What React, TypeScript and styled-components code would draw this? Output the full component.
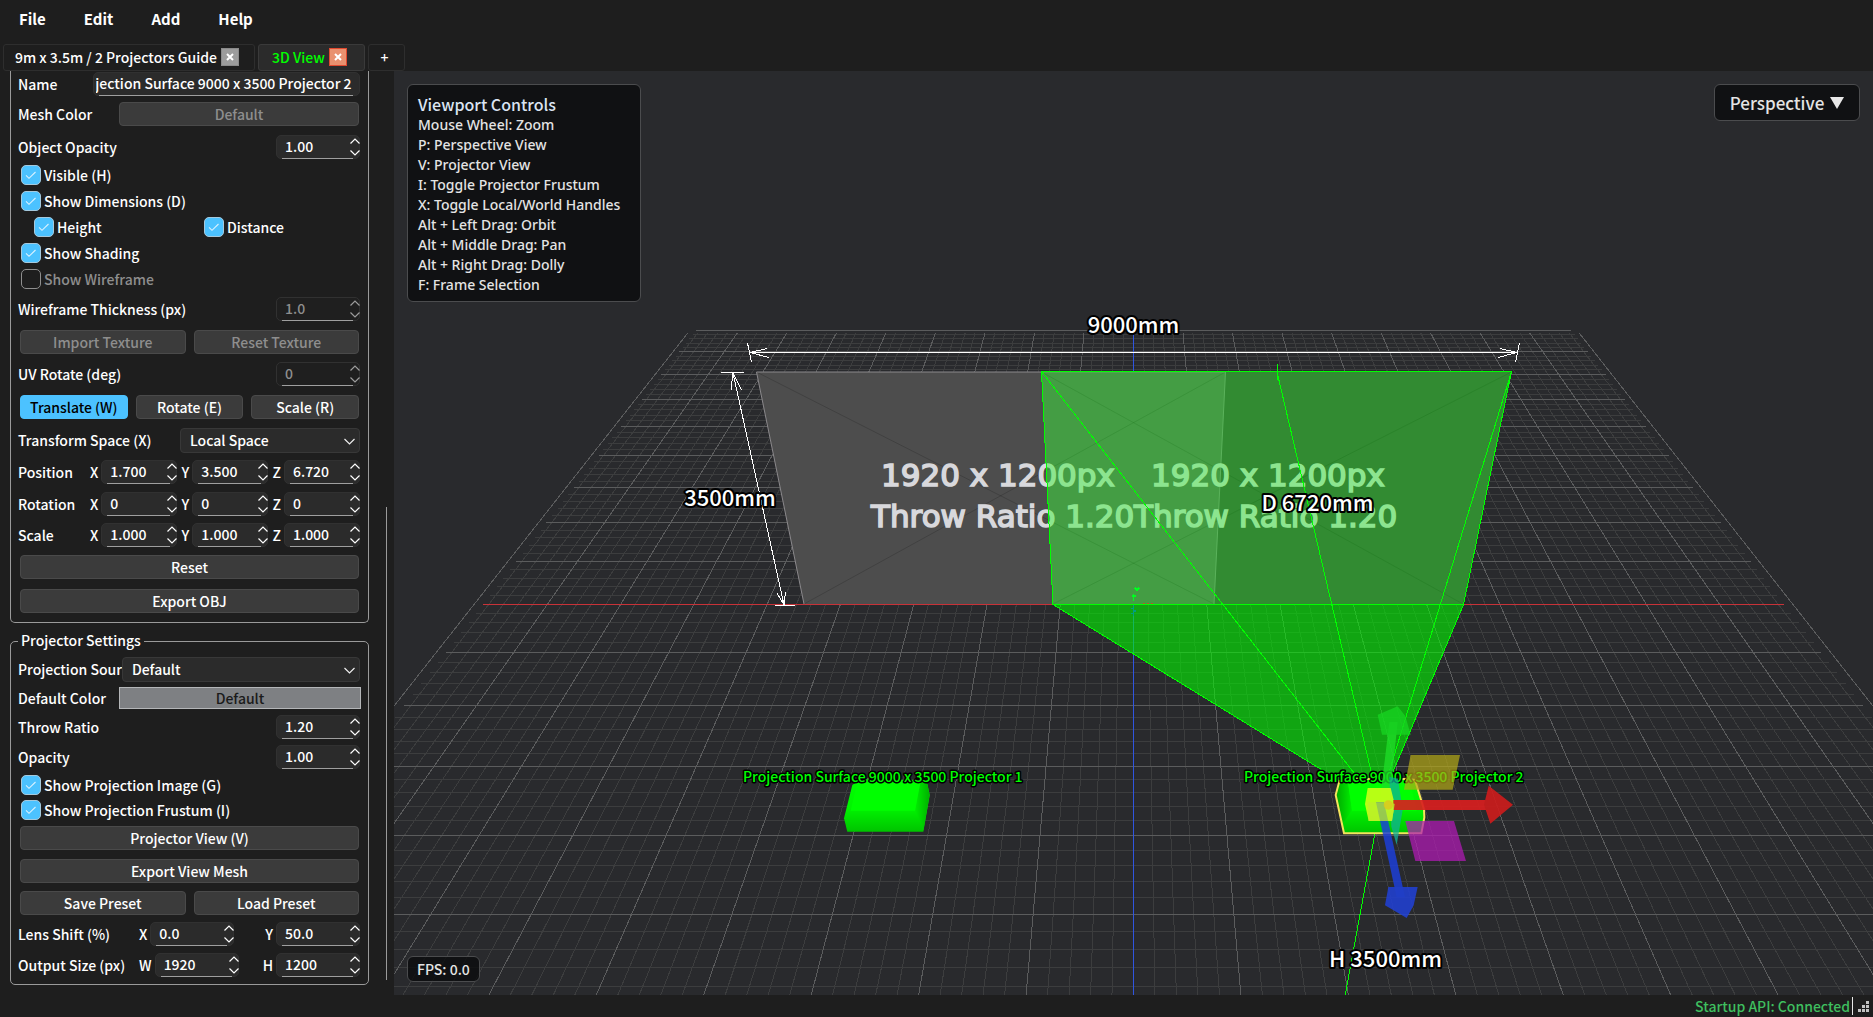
import React, { useEffect, useRef } from "react";
import styled, { createGlobalStyle, css } from "styled-components";

const UI_FONT = `"Noto Sans CJK KR", "Noto Sans", sans-serif`;

const GlobalStyle = createGlobalStyle`
  * { box-sizing: border-box; }
  body { margin: 0; background: #1e1e1e; }
  button, input, select { font: inherit; color: inherit; margin: 0; }
`;

/* ---------- frame ---------- */

const Page = styled.div`
  display: flex;
  flex-direction: column;
  height: 100vh;
  overflow: hidden;
  background: #1e1e1e;
  color: #fff;
  font-family: ${UI_FONT};
  font-size: 14px;
  font-weight: 500;
  line-height: 20px;
`;

const MenuBar = styled.nav`
  display: flex;
  flex: none;
  height: 44px;
  padding: 4px 0 10px 9px;
  gap: 18px;
`;

const MenuItem = styled.button`
  border: 0;
  padding: 0 10px;
  background: none;
  font-size: 15px;
  font-weight: 700;
`;

const TabStrip = styled.div`
  display: flex;
  flex: none;
  height: 27px;
  gap: 3px;
  padding-left: 3px;
`;

const Tab = styled.div<{ $active?: boolean }>`
  display: flex;
  align-items: center;
  justify-content: center;
  gap: 4px;
  width: ${(p) => (p.$active ? 107 : 252)}px;
  padding: 0 4px 2px 0;
  border: 1px solid ${(p) => (p.$active ? "#3a3a3a" : "#2e2e2e")};
  border-radius: 3px;
  background: ${(p) => (p.$active ? "#2b2b2b" : "#1e1e1e")};
`;

const TabName = styled.button<{ $active?: boolean }>`
  border: 0;
  padding: 0;
  background: none;
  white-space: nowrap;
  color: ${(p) => (p.$active ? "#00ff00" : "#fff")};
`;

const CloseButton = styled.button<{ $active?: boolean }>`
  display: grid;
  place-items: center;
  width: 18px;
  height: 18px;
  padding: 0;
  border: 1px solid ${(p) => (p.$active ? "#e0492f" : "#8a8a8a")};
  background: ${(p) => (p.$active ? "#e9916f" : "#9c9c9c")};
`;

const AddTab = styled.button`
  width: 37px;
  padding: 0 4px 2px 0;
  border: 1px solid #2e2e2e;
  border-radius: 3px;
  background: none;
`;

const Main = styled.main`
  display: flex;
  flex: 1;
  min-height: 0;
`;

const StatusBar = styled.footer`
  display: flex;
  flex: none;
  align-items: center;
  justify-content: flex-end;
  gap: 2px;
  height: 22px;
  padding-right: 4px;
  color: #3fbf5f;
`;

const Caret = styled.span`
  width: 1px;
  height: 18px;
  margin-right: 3px;
  background: #e8e8e8;
`;

/* ---------- side panel ---------- */

const Side = styled.aside`
  display: flex;
  flex: none;
  width: 394px;
  padding-left: 10px;
  overflow: hidden;
`;

const Groups = styled.div`
  width: 359px;
`;

const Group = styled.section<{ $open?: boolean }>`
  display: flex;
  flex-direction: column;
  border: 1px solid #9a9a9a;
  border-radius: ${(p) => (p.$open ? "0 0 5px 5px" : "5px")};
  padding: ${(p) => (p.$open ? "0 8px 4px 7px" : "4px 8px 4px 7px")};
  ${(p) => p.$open && css`border-top: 0;`}
`;

const GroupTitle = styled.h2`
  align-self: flex-start;
  margin: -17px 0 0;
  padding: 0 3px;
  background: #1e1e1e;
  font-size: 14px;
  font-weight: 500;
  line-height: 22px;
`;

const GroupSpace = styled.div`
  height: 18px;
`;

const Row = styled.div<{ $h: number }>`
  display: flex;
  align-items: center;
  justify-content: space-between;
  height: ${(p) => p.$h}px;
`;

const Label = styled.label<{ $w?: number }>`
  width: ${(p) => (p.$w ? `${p.$w}px` : "auto")};
  white-space: nowrap;
`;

const ButtonRow = styled(Row)`
  padding: 0 1px 0 2px;
  gap: 8px;
`;

const PushButton = styled.button<{ $on?: boolean }>`
  flex: 1;
  height: 24px;
  padding: 0;
  border: 1px solid ${(p) => (p.$on ? "#4cc2ff" : "#4a4a4a")};
  border-radius: 4px;
  background: ${(p) => (p.$on ? "#4cc2ff" : "#3b3b3b")};
  color: ${(p) => (p.$on ? "#000" : "#fff")};
  line-height: 20px;
  &:disabled { color: #8e8e8e; }
`;

const MeshButton = styled(PushButton)`
  flex: none;
  width: 240px;
  margin-right: 1px;
`;

const ColorButton = styled.button`
  width: 242px;
  height: 22px;
  margin-right: -1px;
  padding: 0;
  border: 1px solid #b4b6b8;
  background: #7e8083;
  color: #1b1b1b;
  line-height: 18px;
`;

const Field = styled.div<{ $w: number; $off?: boolean }>`
  position: relative;
  width: ${(p) => p.$w}px;
  height: 24px;
  border: 1px solid #313131;
  border-radius: 5px;
  background: ${(p) => (p.$off ? "#1f1f1f" : "#2b2b2b")};
  color: ${(p) => (p.$off ? "#8e8e8e" : "#fff")};
  &::after {
    content: "";
    position: absolute;
    left: 5px;
    right: 6px;
    bottom: -1px;
    height: 1px;
    background: #9f9f9f;
  }
`;

const FieldInput = styled.input<{ $wide?: boolean }>`
  display: block;
  width: 100%;
  height: 22px;
  padding: ${(p) => (p.$wide ? "0 7px 2px 2px" : "0 16px 2px 8px")};
  border: 0;
  outline: 0;
  background: none;
`;

const Arrows = styled.svg<{ $off?: boolean }>`
  position: absolute;
  right: -2px;
  top: 1px;
  width: 12px;
  height: 20px;
  fill: none;
  stroke: ${(p) => (p.$off ? "#9c9c9c" : "#fff")};
  stroke-width: 1.2;
`;

const Axis = styled.div`
  display: flex;
  align-items: center;
  gap: 3px;
`;

const AxisSet = styled.div`
  display: flex;
  flex: 1;
  justify-content: space-between;
`;

const PairSet = styled.div<{ $gap: number }>`
  display: flex;
  flex: 1;
  justify-content: flex-end;
  gap: ${(p) => p.$gap}px;
`;

const SelectBox = styled.div<{ $w: number }>`
  position: relative;
  width: ${(p) => p.$w}px;
  height: 25px;
  select {
    appearance: none;
    width: 100%;
    height: 25px;
    padding: 0 24px 0 9px;
    border: 1px solid #383838;
    border-radius: 4px;
    background: #2b2b2b;
    line-height: 22px;
  }
  svg {
    position: absolute;
    right: 5px;
    top: 10px;
    fill: none;
    stroke: #eee;
    stroke-width: 1.2;
    pointer-events: none;
  }
`;

const CheckRow = styled.div<{ $h: number; $inset?: boolean }>`
  display: grid;
  grid-template-columns: ${(p) => (p.$inset ? "170px 1fr" : "1fr")};
  align-items: center;
  height: ${(p) => p.$h}px;
  padding-left: ${(p) => (p.$inset ? 16 : 3)}px;
`;

const CheckLabel = styled.label<{ $off?: boolean }>`
  display: flex;
  align-items: center;
  gap: 3px;
  color: ${(p) => (p.$off ? "#8e8e8e" : "#fff")};
`;

const CheckBox = styled.input`
  appearance: none;
  width: 20px;
  height: 20px;
  border: 1px solid #8f8f8f;
  border-radius: 5px;
  background: #1e1e1e;
  &:checked {
    border-color: #a5c9dd;
    background: #4cc2ff
      url("data:image/svg+xml,%3Csvg xmlns='http://www.w3.org/2000/svg' viewBox='0 0 18 18' fill='none' stroke='%23d8f1ff' stroke-width='1.1'%3E%3Cpath d='M4 9.3l3 3L13.5 6'/%3E%3C/svg%3E")
      center / 18px 18px;
  }
`;

const ScrollTrack = styled.div`
  display: flex;
  align-items: flex-end;
  width: 25px;
  padding: 0 0 15px 17px;
`;

const ScrollThumb = styled.div`
  width: 1px;
  height: 52%;
  background: #9a9a9a;
`;

/* ---------- viewport ---------- */

const Viewport = styled.section`
  position: relative;
  flex: 1;
  min-width: 0;
  background: #292a2d;
  overflow: hidden;
`;

const Scene = styled.svg`
  display: block;
  width: 100%;
  height: 100%;
  text {
    font-family: ${UI_FONT};
  }
`;

const overlayBox = css`
  position: absolute;
  border: 1px solid #4b4c4e;
  border-radius: 6px;
  background: #101113;
  color: #e4e4e4;
`;

const HelpBox = styled.div`
  ${overlayBox}
  top: 13px;
  left: 13px;
  width: 234px;
  padding: 9px 10px 6px;
  h3 {
    margin: 0;
    color: #dbe4f2;
    font-size: 16px;
    font-weight: 500;
    line-height: 20px;
  }
  ul {
    margin: 1px 0 0;
    padding: 0;
    list-style: none;
    font-family: "Noto Sans", sans-serif;
  }
`;

const ViewButton = styled.button`
  ${overlayBox}
  top: 13px;
  right: 13px;
  display: flex;
  align-items: center;
  justify-content: center;
  gap: 6px;
  width: 146px;
  height: 37px;
  font-size: 17px;
`;

const Fps = styled.div`
  ${overlayBox}
  left: 13px;
  bottom: 13px;
  padding: 2px 9px;
  background: rgba(10, 11, 13, 0.8);
`;

/* ---------- parts ---------- */

const Spin = ({ id, w, value, off }: { id: string; w: number; value: string; off?: boolean }) => (
  <Field $w={w} $off={off}>
    <FieldInput id={id} defaultValue={value} disabled={off} />
    <Arrows $off={off} viewBox="0 0 12 20">
      <path d="M1.500 6.500L6 2L10.500 6.500M1.500 13.500L6 18L10.500 13.500" />
    </Arrows>
  </Field>
);

const AxisField = ({ id, axis, w, value }: { id: string; axis: string; w: number; value: string }) => (
  <Axis>
    <label htmlFor={id}>{axis}</label>
    <Spin id={id} w={w} value={value} />
  </Axis>
);

const Vector = ({ name, values, h }: { name: string; values: string[]; h: number }) => (
  <Row $h={h}>
    <Label as="span" $w={72}>{name}</Label>
    <AxisSet>
      {["X", "Y", "Z"].map((a, i) => (
        <AxisField key={a} id={`${name}-${a}`} axis={a} w={76} value={values[i]} />
      ))}
    </AxisSet>
  </Row>
);

const Check = ({ name, off }: { name: string; off?: boolean }) => (
  <CheckLabel $off={off}>
    <CheckBox type="checkbox" defaultChecked={!off} disabled={off} />
    {name}
  </CheckLabel>
);

const Select = ({ id, w, options }: { id: string; w: number; options: string[] }) => (
  <SelectBox $w={w}>
    <select id={id}>
      {options.map((o) => (
        <option key={o}>{o}</option>
      ))}
    </select>
    <svg width="11" height="7" viewBox="0 0 11 7">
      <path d="M.5 1L5.500 6L10.500 1" />
    </svg>
  </SelectBox>
);

const Cross = () => (
  <svg width="8" height="8" viewBox="0 0 8 8" stroke="#fff" strokeWidth="2">
    <path d="M1 1l6 6M7 1l-6 6" />
  </svg>
);

/* ---------- ground grid ---------- */

const CX = 1133.5;
const HORIZON = -233;
const DEPTH = 18.507;
const SCALE_X = 1356;
const SCALE_Y = 15498;
const EXTENT = 8.88;

const ground = (x: number, z: number): [number, number] => {
  const w = DEPTH + z;
  return [CX + (SCALE_X * x) / w, HORIZON + SCALE_Y / w];
};

const segment = (x1: number, z1: number, x2: number, z2: number) => {
  const a = ground(x1, z1);
  const b = ground(x2, z2);
  return `M${a[0].toFixed(1)} ${a[1].toFixed(1)}L${b[0].toFixed(1)} ${b[1].toFixed(1)}`;
};

const gridPath = (major: boolean) => {
  const parts: string[] = [];
  for (let i = -45; i <= 45; i++) {
    if ((i % 5 === 0) !== major || i === 0) continue;
    const v = i / 5;
    parts.push(segment(v, EXTENT, v, -7));
    if (v > -7) parts.push(segment(-EXTENT, v, EXTENT, v));
  }
  return parts.join("");
};

const MINOR = gridPath(false);
const MAJOR = gridPath(true);

const Tag = styled.text`
  fill: #fff;
  stroke: #000;
  stroke-width: 4px;
  stroke-linejoin: round;
  paint-order: stroke;
  font-size: 22px;
  font-weight: 500;
`;

const NameTag = styled(Tag)`
  fill: #00ff00;
  stroke-width: 3px;
  font-size: 14px;
`;

const WallText = styled.text`
  && { font-family: "DejaVu Sans", sans-serif; }
  font-size: 31px;
  fill: #d8d8dc;
  stroke: #d8d8dc;
  stroke-width: 1.6px;
`;

const SceneView = () => (
  <Scene viewBox="394 71 1479 924" preserveAspectRatio="xMidYMid slice">
    <g fill="none" shapeRendering="crispEdges">
      <path d={MINOR} stroke="#3c3d3e" />
      <path d={MAJOR} stroke="#5b5c5d" />
      <path d={segment(-EXTENT, 0, EXTENT, 0)} stroke="#c83238" />
      <path d={segment(0, EXTENT, 0, -7)} stroke="#2f55e0" />
    </g>

    <g>
      <path d="M756.500 372H1225.500L1214 604H804Z" fill="#4d4d4d" />
      <path d="M1041.500 372H1511.500L1463 604H1053Z" fill="#4d4d4d" />
      <path d="M1041.500 372H1225.500L1214 604H1053Z" fill="#696969" />
      <path d="M756.500 372L1214 604M804 604L1225.500 372M1041.500 372L1463 604M1053 604L1511.500 372" stroke="#000" strokeOpacity=".16" fill="none" />
      <path d="M804 604L756.500 372H1225.500L1214 604" stroke="#8b898c" fill="none" />
    </g>

    <WallText x="881" y="486">1920 x 1200px</WallText>
    <WallText x="871" y="527">Throw Ratio 1.20</WallText>
    <WallText x="1151" y="486">1920 x 1200px</WallText>
    <WallText x="1134" y="527">Throw Ratio 1.20</WallText>

    <path d="M1041.500 371.500H1511.500L1463.500 604.500H1053Z" fill="#00ff00" fillOpacity=".35" />
    <path d="M1053 604.500H1463.500L1379 805Z" fill="#00ff00" fillOpacity=".58" />
    <g stroke="#00ff00" fill="none" shapeRendering="crispEdges">
      <path d="M1041.500 371.500H1511.500L1463.500 604.500H1053Z" />
      <path d="M1053 604.500L1379 805L1463.500 604.500M1041.500 371.500L1379 805L1511.500 371.500" />
      <path d="M1277 364V380M1277 372L1379 805M1375 833L1345 996" />
    </g>
    <g fill="none" shapeRendering="crispEdges">
      <path d="M1133.500 594V601M1131.500 596H1136M1135 588l2 2l2-2" stroke="#00ff20" strokeWidth="1.500" />
      <path d="M1133.500 605V616M1131 608l5 3l-5 3" stroke="#00a080" />
      <path d="M1143 603.500h2m2 0h2m2 0h2" stroke="#b06020" />
    </g>

    <g stroke="#fff" fill="none" shapeRendering="crispEdges">
      <path d="M750 352.500H1517M747.500 343L751.500 362.500M769 357.500L750 352.500L767 348.500" />
      <path d="M1519.500 343L1515.500 362.500M1498 357.500L1517 352.500L1500 348.500" />
      <path d="M721 372.500H744M775 605.500H795M733 373L784 605M731 390L733 373L741.500 390M777 593L784 605L785.500 592" />
    </g>

    <Tag x="1133.500" y="333" textAnchor="middle">9000mm</Tag>
    <Tag x="730" y="506" textAnchor="middle">3500mm</Tag>
    <Tag x="1317.500" y="511" textAnchor="middle">D 6720mm</Tag>
    <Tag x="1385.500" y="967" textAnchor="middle">H 3500mm</Tag>

    <defs>
      <linearGradient id="front" x1="0" y1="0" x2="0" y2="1">
        <stop offset="0" stopColor="#00ff00" />
        <stop offset=".55" stopColor="#00f400" />
        <stop offset="1" stopColor="#00c400" />
      </linearGradient>
      <linearGradient id="side" x1="0" y1="0" x2="1" y2="0">
        <stop offset="0" stopColor="#00ee00" />
        <stop offset="1" stopColor="#00b000" />
      </linearGradient>
      <linearGradient id="sideLeft" x1="1" y1="0" x2="0" y2="0">
        <stop offset="0" stopColor="#00ee00" />
        <stop offset="1" stopColor="#00a800" />
      </linearGradient>
    </defs>

    <g transform="translate(720 740) scale(.33333)">
      <path d="M397 135L420 118L598 120L622 132L629 165L610 275H382L372 235Z" fill="url(#front)" />
      <path d="M598 124L622 132L629 165L610 272L596 235L585 212Z" fill="url(#side)" />
      <path d="M413 124L602 124L585 212H392Z" fill="#00ff00" />
    </g>
    <NameTag x="743" y="782">Projection Surface 9000 x 3500 Projector 1</NameTag>

    <g transform="translate(1220 680) scale(.33333)">
      <path d="M358 304L372 297H560L585 300L612 388L613 412L604 460H372L347 345Z" fill="url(#front)" />
      <path d="M358 304L384 306L396 390L376 420L366 430L347 345Z" fill="url(#sideLeft)" />
      <path d="M384 306H570L590 392H396Z" fill="#00ff00" />
      <path d="M358 304L372 297H560L585 300L612 388L613 412L604 460H372L347 345Z" fill="none" stroke="#f4e45c" strokeWidth="6" />
    </g>
    <NameTag x="1244" y="782">Projection Surface 9000 x 3500 Projector 2</NameTag>

    <g transform="translate(1220 680) scale(.33333)" opacity=".92">
      <path d="M572 225H720L698 329H552Z" fill="#b5aa18" fillOpacity=".76" />
      <path d="M556 423H702L738 543H586Z" fill="#b01cb4" fillOpacity=".8" />
      <path d="M508 126H533L515 300L520 375H478Z" fill="#1fdd28" fillOpacity=".85" />
      <path d="M473 104L533 79L556 108L572 164H486Z" fill="#18d322" fillOpacity=".85" />
      <path d="M508 290L534 296L548 390L530 495L514 440Z" fill="#12b09a" fillOpacity=".8" />
      <path d="M443 324H512L524 372L516 423H446L435 372Z" fill="#d8ff18" fillOpacity=".92" />
      <path d="M520 360H812V390H520Z" fill="#d81f1f" />
      <path d="M806 317L879 374L811 431L792 374Z" fill="#cb1c1c" />
      <path d="M468 367H492L555 652H530Z" fill="#1d3fdb" fillOpacity=".9" />
      <path d="M443 367H512L524 372L516 423H446Z" fill="#ccef30" fillOpacity=".75" />
      <path d="M505 621H593L581 676L560 714L495 676Z" fill="#2140d4" fillOpacity=".95" />
      <circle cx="505" cy="375" r="14" fill="#f0c020" fillOpacity=".8" />
    </g>
  </Scene>
);

const HELP = [
  "Mouse Wheel: Zoom",
  "P: Perspective View",
  "V: Projector View",
  "I: Toggle Projector Frustum",
  "X: Toggle Local/World Handles",
  "Alt + Left Drag: Orbit",
  "Alt + Middle Drag: Pan",
  "Alt + Right Drag: Dolly",
  "F: Frame Selection",
];

export default function App() {
  const nameRef = useRef<HTMLInputElement>(null);
  useEffect(() => {
    const el = nameRef.current;
    if (el) el.scrollLeft = el.scrollWidth;
  }, []);

  return (
    <Page>
      <GlobalStyle />
      <MenuBar>
        {["File", "Edit", "Add", "Help"].map((m) => (
          <MenuItem key={m}>{m}</MenuItem>
        ))}
      </MenuBar>
      <TabStrip>
        <Tab>
          <TabName>9m x 3.5m / 2 Projectors Guide</TabName>
          <CloseButton aria-label="Close tab"><Cross /></CloseButton>
        </Tab>
        <Tab $active>
          <TabName $active>3D View</TabName>
          <CloseButton $active aria-label="Close tab"><Cross /></CloseButton>
        </Tab>
        <AddTab>+</AddTab>
      </TabStrip>
      <Main>
        <Side>
          <Groups>
            <Group $open>
              <Row $h={25}>
                <Label htmlFor="name">Name</Label>
                <Field $w={267}>
                  <FieldInput ref={nameRef} id="name" $wide defaultValue="Projection Surface 9000 x 3500 Projector 2" />
                </Field>
              </Row>
              <Row $h={36}>
                <Label htmlFor="mesh">Mesh Color</Label>
                <MeshButton id="mesh" disabled>Default</MeshButton>
              </Row>
              <Row $h={30}>
                <Label htmlFor="objop">Object Opacity</Label>
                <Spin id="objop" w={84} value="1.00" />
              </Row>
              <CheckRow $h={26}><Check name="Visible (H)" /></CheckRow>
              <CheckRow $h={26}><Check name="Show Dimensions (D)" /></CheckRow>
              <CheckRow $h={26} $inset>
                <Check name="Height" />
                <Check name="Distance" />
              </CheckRow>
              <CheckRow $h={26}><Check name="Show Shading" /></CheckRow>
              <CheckRow $h={26}><Check name="Show Wireframe" off /></CheckRow>
              <Row $h={34}>
                <Label htmlFor="wire">Wireframe Thickness (px)</Label>
                <Spin id="wire" w={84} value="1.0" off />
              </Row>
              <ButtonRow $h={32}>
                <PushButton disabled>Import Texture</PushButton>
                <PushButton disabled>Reset Texture</PushButton>
              </ButtonRow>
              <Row $h={32}>
                <Label htmlFor="uv">UV Rotate (deg)</Label>
                <Spin id="uv" w={84} value="0" off />
              </Row>
              <ButtonRow $h={34}>
                <PushButton $on>Translate (W)</PushButton>
                <PushButton>Rotate (E)</PushButton>
                <PushButton>Scale (R)</PushButton>
              </ButtonRow>
              <Row $h={32}>
                <Label htmlFor="space">Transform Space (X)</Label>
                <Select id="space" w={180} options={["Local Space", "World Space"]} />
              </Row>
              <Vector h={32} name="Position" values={["1.700", "3.500", "6.720"]} />
              <Vector h={31} name="Rotation" values={["0", "0", "0"]} />
              <Vector h={31} name="Scale" values={["1.000", "1.000", "1.000"]} />
              <ButtonRow $h={34}><PushButton>Reset</PushButton></ButtonRow>
              <ButtonRow $h={34}><PushButton>Export OBJ</PushButton></ButtonRow>
            </Group>
            <GroupSpace />
            <Group>
              <GroupTitle>Projector Settings</GroupTitle>
              <Row $h={3} />
              <Row $h={30}>
                <Label htmlFor="source">Projection Sour</Label>
                <Select id="source" w={240} options={["Default"]} />
              </Row>
              <Row $h={28}>
                <Label htmlFor="color">Default Color</Label>
                <ColorButton id="color">Default</ColorButton>
              </Row>
              <Row $h={30}>
                <Label htmlFor="throw">Throw Ratio</Label>
                <Spin id="throw" w={84} value="1.20" />
              </Row>
              <Row $h={30}>
                <Label htmlFor="op">Opacity</Label>
                <Spin id="op" w={84} value="1.00" />
              </Row>
              <CheckRow $h={25}><Check name="Show Projection Image (G)" /></CheckRow>
              <CheckRow $h={25}><Check name="Show Projection Frustum (I)" /></CheckRow>
              <ButtonRow $h={32}><PushButton>Projector View (V)</PushButton></ButtonRow>
              <ButtonRow $h={34}><PushButton>Export View Mesh</PushButton></ButtonRow>
              <ButtonRow $h={30}>
                <PushButton>Save Preset</PushButton>
                <PushButton>Load Preset</PushButton>
              </ButtonRow>
              <Row $h={32}>
                <Label as="span">Lens Shift (%)</Label>
                <PairSet $gap={31}>
                  <AxisField id="lx" axis="X" w={84} value="0.0" />
                  <AxisField id="ly" axis="Y" w={84} value="50.0" />
                </PairSet>
              </Row>
              <Row $h={30}>
                <Label as="span">Output Size (px)</Label>
                <PairSet $gap={24}>
                  <AxisField id="ow" axis="W" w={84} value="1920" />
                  <AxisField id="oh" axis="H" w={84} value="1200" />
                </PairSet>
              </Row>
            </Group>
          </Groups>
          <ScrollTrack><ScrollThumb /></ScrollTrack>
        </Side>
        <Viewport>
          <SceneView />
          <HelpBox>
            <h3>Viewport Controls</h3>
            <ul>
              {HELP.map((h) => (
                <li key={h}>{h}</li>
              ))}
            </ul>
          </HelpBox>
          <ViewButton>
            Perspective
            <svg width="14" height="12" viewBox="0 0 14 12" fill="#e8e8e8"><path d="M0 0H14L7 12Z" /></svg>
          </ViewButton>
          <Fps>FPS: 0.0</Fps>
        </Viewport>
      </Main>
      <StatusBar>
        Startup API: Connected
        <Caret />
        <svg width="11" height="11" viewBox="0 0 11 11" fill="#c4c4c4">
          <path d="M8 0h3v3h-3zM4 4h3v3h-3zM8 4h3v3h-3zM0 8h3v3h-3zM4 8h3v3h-3zM8 8h3v3h-3z" />
        </svg>
      </StatusBar>
    </Page>
  );
}
